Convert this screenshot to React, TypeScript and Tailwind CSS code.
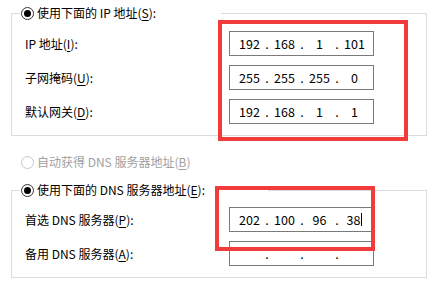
import React from 'react';

const FONT = '"Noto Sans CJK SC", "Noto Sans", sans-serif';

function Key({ k }: { k: string }) {
  return <span className="underline decoration-1 underline-offset-[2px]">{k}</span>;
}

function Radio({ checked, disabled }: { checked?: boolean; disabled?: boolean }) {
  return (
    <span
      className={`flex h-[13px] w-[13px] shrink-0 items-center justify-center rounded-full border bg-white ${
        disabled ? 'border-[#c6c6c6]' : 'border-[#333333]'
      }`}
    >
      {checked && <span className="h-[7px] w-[7px] rounded-full bg-black" />}
    </span>
  );
}

function IpField({ octets, caret }: { octets: string[]; caret?: boolean }) {
  return (
    <div className="flex h-[25px] w-[145px] shrink-0 items-center border border-[#7a7a7a] bg-white pl-[6px] text-[12.5px] leading-[16px] text-black">
      {octets.map((o, i) => (
        <React.Fragment key={i}>
          {i > 0 && <span className="w-[8px] text-center">.</span>}
          <span className="flex h-[16px] w-[27px] items-center justify-center">
            {o}
            {caret && i === 3 && <span className="ml-px inline-block h-[13px] w-px bg-black" />}
          </span>
        </React.Fragment>
      ))}
    </div>
  );
}

function Row({ label, children }: { label: React.ReactNode; children: React.ReactNode }) {
  return (
    <div className="flex h-[25px] items-center">
      <span className="w-[209px] pl-[5px]">{label}</span>
      {children}
    </div>
  );
}

function Group({
  title,
  legendWidth,
  pt,
  pb,
  children,
}: {
  title: React.ReactNode;
  legendWidth: string;
  pt: string;
  pb: string;
  children: React.ReactNode;
}) {
  return (
    <fieldset className={`ml-[11px] w-[416px] border border-[#dcdcdc] px-[8px] ${pt} ${pb}`}>
      <legend className={`flex h-[16px] items-center ${legendWidth}`}>
        <span className="ml-px">
          <Radio checked />
        </span>
        <span className="ml-[3px] leading-[16px]">{title}</span>
      </legend>
      <div className="flex flex-col gap-[9px]">{children}</div>
    </fieldset>
  );
}

export default function App() {
  return (
    <div
      className="relative h-[284px] w-[440px] overflow-hidden bg-white pt-[5px] text-[12px] leading-[16px] text-black"
      style={{ fontFamily: FONT }}
    >
      <Group
        title={
          <>
            使用下面的 IP 地址(<Key k="S" />):
          </>
        }
        legendWidth="w-[201px]"
        pt="pt-[10px]"
        pb="pb-[11px]"
      >
        <Row
          label={
            <>
              IP 地址(<Key k="I" />):
            </>
          }
        >
          <IpField octets={['192', '168', '1', '101']} />
        </Row>
        <Row
          label={
            <>
              子网掩码(<Key k="U" />):
            </>
          }
        >
          <IpField octets={['255', '255', '255', '0']} />
        </Row>
        <Row
          label={
            <>
              默认网关(<Key k="D" />):
            </>
          }
        >
          <IpField octets={['192', '168', '1', '1']} />
        </Row>
      </Group>

      <div className="mt-[18px] flex h-[16px] items-center pl-[21px] text-[#a0a0a0]">
        <Radio disabled />
        <span className="ml-[3px]">
          自动获得 DNS 服务器地址(<Key k="B" />)
        </span>
      </div>

      <div className="mt-[12px]">
        <Group
          title={
            <>
              使用下面的 DNS 服务器地址(<Key k="E" />):
            </>
          }
          legendWidth="w-[248px]"
          pt="pt-[9px]"
          pb="pb-[11px]"
        >
          <Row
            label={
              <>
                首选 DNS 服务器(<Key k="P" />):
              </>
            }
          >
            <IpField octets={['202', '100', '96', '38']} caret />
          </Row>
          <Row
            label={
              <>
                备用 DNS 服务器(<Key k="A" />):
              </>
            }
          >
            <IpField octets={['', '', '', '']} />
          </Row>
        </Group>
      </div>

      {/* red highlight marks */}
      <div className="pointer-events-none absolute left-[218px] top-[20px] h-[121px] w-[190px] border-[4px] border-[#f23c3c]" />
      <div className="pointer-events-none absolute left-[215px] top-[186px] h-[65px] w-[160px] border-[4px] border-[#f23c3c]" />
    </div>
  );
}
